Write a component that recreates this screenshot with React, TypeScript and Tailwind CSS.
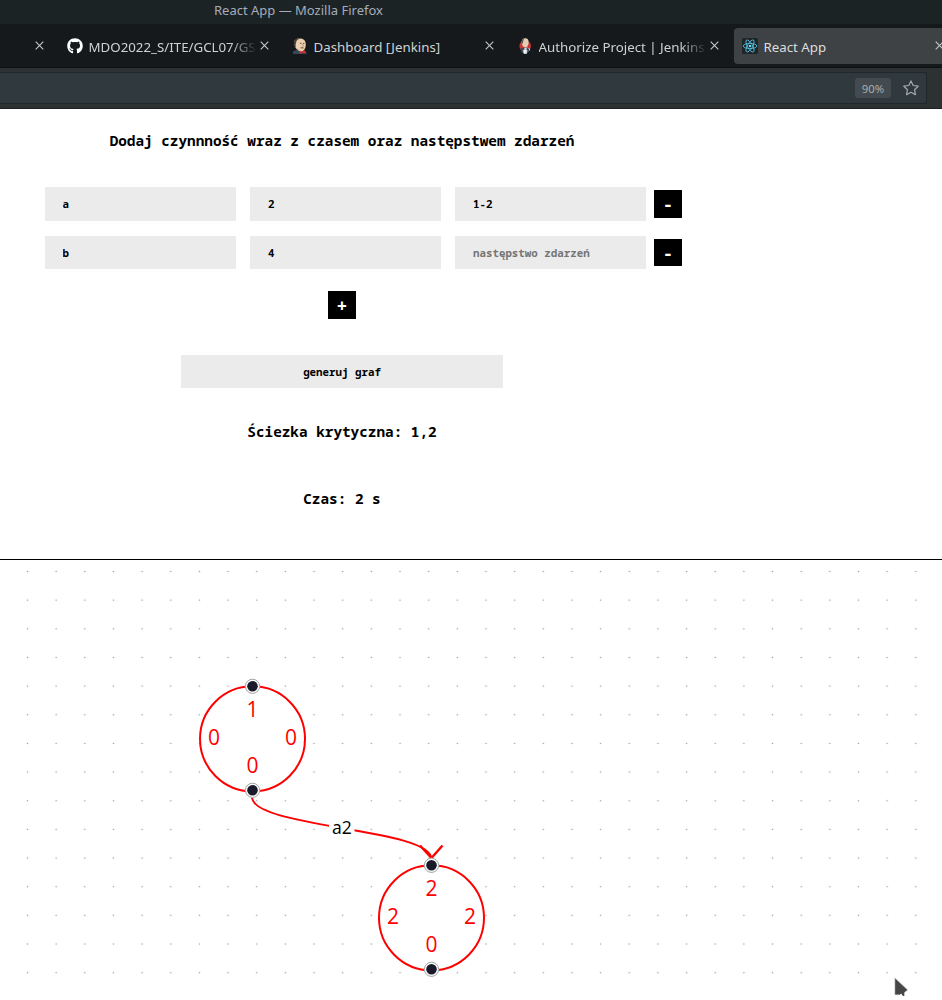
import React from "react";
import { FaGithub } from "react-icons/fa";

const RED = "#ff0000";

function Close({ className = "" }: { className?: string }) {
  return (
    <svg width="9" height="9" viewBox="0 0 9 9" className={"shrink-0 " + className}>
      <path d="M0.7 0.7L8.3 8.3M8.3 0.7L0.7 8.3" stroke="#c4c8c8" strokeWidth="1.1" fill="none" />
    </svg>
  );
}

function JenkinsButler() {
  return (
    <svg width="16" height="16" viewBox="0 0 16 16" className="shrink-0">
      <path d="M1 16V13.2L5 12l3 1 5-.2L14.500 14v2z" fill="#34495c" />
      <path d="M2.200 5.500C1.800 2.500 4 .5 7.500.5c4 0 6 2 6.200 5 .2 3-.3 6-3 7.700-2 .8-4 0-5.700-1.700C3.500 10 2.500 8 2.200 5.500z" fill="#ecd0ae" />
      <path d="M2.400 8.500C1.300 6 1.800 2.500 4 1.200 5 .5 8 .2 10 .8 8 .8 6.200 1 5 2.300 4 3.500 4.300 5 3.600 6.200L3.800 9z" fill="#47403b" />
      <path d="M8 5.300h1.500M11 5.400h1.300M8.600 9.800l3 .1" stroke="#4b3b34" strokeWidth=".9" />
      <path d="M10.500 6l.9 2-1.200.2M5 10.500l2.300 2.300" stroke="#a98264" strokeWidth=".7" fill="none" />
      <path d="M7.600 13l2.200.7 3.200-1.400.4 3-3.400-.5-2 1.200z" fill="#d62c2d" />
    </svg>
  );
}

function JenkinsLogo() {
  return (
    <svg width="16" height="16" viewBox="0 0 16 16" className="shrink-0">
      <ellipse cx="8.200" cy="8" rx="5.800" ry="5.500" fill="#c63936" />
      <path d="M3.200 11l4-1.500 4 .6 1.600 3L10 15H5z" fill="#31475c" />
      <path d="M4.700 4.500C4.600 1.500 6 .2 8.300.3c2.500.1 3.500 1.800 3.300 4.200-.2 2.700-1.200 5-3 5C6.200 9.400 4.800 7 4.700 4.500z" fill="#e4cfb5" />
      <path d="M4.700 5.700C4 2.800 5 .8 7.700.2 6.500 1.400 6.300 3 5.800 5.700z" fill="#675b50" />
      <path d="M7 10l1.600 1L10.500 9.700M6.300 12.300l1.800-1 2 .8-.6 3.700H7z" stroke="#eceeee" fill="#eceeee" strokeWidth=".5" />
      <path d="M11.500 10.500l1 .3v1.700" stroke="#ddd" fill="none" />
    </svg>
  );
}

function ReactIcon() {
  return (
    <svg width="16" height="16" viewBox="0 0 16 16" className="shrink-0">
      <rect width="16" height="16" rx="1.500" fill="#20252a" />
      <g fill="none" stroke="#53c1de" strokeWidth=".85">
        <ellipse cx="8" cy="8" rx="6.800" ry="2.600" transform="rotate(0 8 8)" />
        <ellipse cx="8" cy="8" rx="6.800" ry="2.600" transform="rotate(60 8 8)" />
        <ellipse cx="8" cy="8" rx="6.800" ry="2.600" transform="rotate(120 8 8)" />
      </g>
      <circle cx="8" cy="8" r="1.300" fill="#61dafb" />
    </svg>
  );
}

function Chrome() {
  return (
    <header className="text-[#d0d2d2]">
      <div className="flex h-6 bg-[#1c2325] pl-[214px] text-[13px] leading-[21px] text-[#a6acba]">
        React App — Mozilla Firefox
      </div>
      <div className="flex h-11 overflow-hidden border-b border-[#0e1112] bg-[#15191b] text-[13.3px] leading-[46px]">
        <div className="flex w-[59px] shrink-0 pl-[34.500px] pt-[17px]">
          <Close />
        </div>
        <div className="flex w-[225px] shrink-0 pl-2">
          <FaGithub className="mt-[14px] shrink-0 text-white" size={16} />
          <span className="ml-[5.500px] w-[168px] shrink-0 overflow-hidden whitespace-nowrap [mask-image:linear-gradient(to_right,black_84%,transparent)]">
            MDO2022_S/ITE/GCL07/GS
          </span>
          <Close className="ml-[3px] mt-[17px]" />
        </div>
        <div className="flex w-[225px] shrink-0 pl-2">
          <div className="mt-[14px]"><JenkinsButler /></div>
          <span className="ml-[5.500px] w-[168px] shrink-0 whitespace-nowrap">Dashboard [Jenkins]</span>
          <Close className="ml-[3px] mt-[17px]" />
        </div>
        <div className="flex w-[225px] shrink-0 pl-2">
          <div className="mt-[14px]"><JenkinsLogo /></div>
          <span className="ml-[5.500px] w-[168px] shrink-0 whitespace-nowrap [mask-image:linear-gradient(to_right,black_84%,transparent)]">
            Authorize Project | Jenkins
          </span>
          <Close className="ml-[3px] mt-[17px]" />
        </div>
        <div className="mt-1 flex h-9 w-[225px] shrink-0 rounded-[4px] bg-[#3e4244] pl-2 leading-[38px] text-[#dcdede]">
          <div className="mt-[10px]"><ReactIcon /></div>
          <span className="ml-[5.500px] w-[168px] shrink-0">React App</span>
          <Close className="ml-[3px] mt-[13px]" />
        </div>
      </div>
      <div className="flex h-[41px] border-b border-[#1c2122] bg-[#2d3131] pr-[15px] pt-1">
        <div className="flex h-8 flex-1 items-center justify-end rounded-r-[3px] border border-l-0 border-[#20282a] bg-[#2f393e] pr-[7px]">
          <span className="mr-3 flex h-5 w-9 items-center justify-center rounded-[3px] bg-[#434b50] pt-[2px] text-[11.300px] text-[#a9adae]">90%</span>
          <svg width="16" height="16" viewBox="0 0 16 16">
            <path d="M8 .9l2.200 4.600 5 .7-3.650 3.500.9 5L8 12.300l-4.450 2.400.9-5L.8 6.200l5-.7z" fill="none" stroke="#a6aaab" strokeWidth="1.200" strokeLinejoin="round" />
          </svg>
        </div>
      </div>
    </header>
  );
}

const fieldBase = "block w-[191px] bg-[#ebebeb] pr-[18px] text-[10.8px] font-bold text-black outline-none placeholder:text-[#757575] placeholder:opacity-100";
const square = "flex w-7 items-center justify-center bg-black font-bold text-white";

function Form() {
  return (
    <main className="flex h-[451px] flex-col border-b border-black font-['Noto_Sans_Mono','DejaVu_Sans_Mono',monospace]">
      <div className="flex w-[684px] flex-col items-center">
        <h1 className="mt-[22px] h-5 whitespace-nowrap text-[14.35px] font-bold leading-5">
          Dodaj czynnność wraz z czasem oraz następstwem zdarzeń
        </h1>
        <div className="mt-9 flex w-full items-center pl-[45px]">
          <input className={fieldBase + " h-[34px] pb-[2px] pl-[17.500px]"} defaultValue="a" />
          <input className={fieldBase + " ml-[14px] h-[34px] pb-[2px] pl-[18px]"} defaultValue="2" />
          <input className={fieldBase + " ml-[14px] h-[34px] pb-[2px] pl-[18px]"} defaultValue="1-2" />
          <button className={square + " ml-2 h-7 text-[18px]"}>-</button>
        </div>
        <div className="mt-[15px] flex w-full items-center pl-[45px]">
          <input className={fieldBase + " h-[33px] pl-[17.500px]"} defaultValue="b" />
          <input className={fieldBase + " ml-[14px] h-[33px] pl-[18px]"} defaultValue="4" />
          <input className={fieldBase + " ml-[14px] h-[33px] pl-[18px]"} placeholder="następstwo zdarzeń" />
          <button className={square + " ml-2 h-[27px] pt-px text-[18px]"}>-</button>
        </div>
        <button className={square + " mt-[22px] h-7 text-[18px]"}>+</button>
        <button className="mt-9 h-[33px] w-[322px] bg-[#ebebeb] pt-[2px] text-[10.8px] font-bold">generuj graf</button>
        <h2 className="mt-[34px] h-5 text-[14.35px] font-bold leading-5">Ściezka krytyczna: 1,2</h2>
        <h2 className="mt-[47px] h-5 text-[14.35px] font-bold leading-5">Czas: 2 s</h2>
      </div>
    </main>
  );
}

type NodeProps = { x: number; y: number; top: string; left: string; right: string; bottom: string };

function Handle({ x, y }: { x: number; y: number }) {
  return (
    <g>
      <circle cx={x} cy={y} r="7.600" fill="white" />
      <circle cx={x} cy={y} r="7.100" fill="none" stroke="#777" strokeWidth=".7" />
      <circle cx={x} cy={y} r="5.300" fill="#1a192b" />
    </g>
  );
}

function GraphNode({ x, y, top, left, right, bottom }: NodeProps) {
  return (
    <g>
      <circle cx={x} cy={y} r="52.500" fill="white" stroke={RED} strokeWidth="2" />
      <g fill={RED} fontSize="21" textAnchor="middle" className="font-['Open_Sans','Noto_Sans',sans-serif]">
        <text x={x} y={y - 21.8}>{top}</text>
        <text x={x - 38.6} y={y + 6.4}>{left}</text>
        <text x={x + 38.6} y={y + 6.4}>{right}</text>
        <text x={x} y={y + 34.2}>{bottom}</text>
      </g>
      <Handle x={x} y={y - 52.5} />
      <Handle x={x} y={y + 51.5} />
    </g>
  );
}

function Graph() {
  return (
    <svg width="942" height="436" viewBox="0 560 942 436" className="block">
      <defs>
        <pattern id="dots" x="13.170" y="557.170" width="28.655" height="28.655" patternUnits="userSpaceOnUse">
          <circle cx="14.330" cy="14.330" r=".8" fill="#81818a" fillOpacity=".75" />
        </pattern>
      </defs>
      <rect y="560" width="942" height="436" fill="url(#dots)" />
      <path d="M252 797C252 828 431.500 828 431.500 859" fill="none" stroke={RED} strokeWidth="1.800" />
      <path d="M420 845.500L431.500 858L442.500 845.500" fill="none" stroke={RED} strokeWidth="2.400" />
      <rect x="329" y="816" width="25.500" height="24" fill="white" />
      <text x="341.800" y="834" fontSize="17.6" textAnchor="middle" className="font-['Open_Sans','Noto_Sans',sans-serif]">a2</text>
      <GraphNode x={252.5} y={738.8} top="1" left="0" right="0" bottom="0" />
      <GraphNode x={431.5} y={917.8} top="2" left="2" right="2" bottom="0" />
      <path d="M894.700 977.500V995h5l1.500-1 2 3h1.500v-4.500l3.200-2.500z" fill="#464646" stroke="#eee" strokeWidth=".8" />
    </svg>
  );
}

export default function App() {
  return (
    <div className="h-[1000px] w-[942px] overflow-hidden bg-white font-['Noto_Sans',sans-serif] text-black">
      <Chrome />
      <Form />
      <Graph />
    </div>
  );
}
